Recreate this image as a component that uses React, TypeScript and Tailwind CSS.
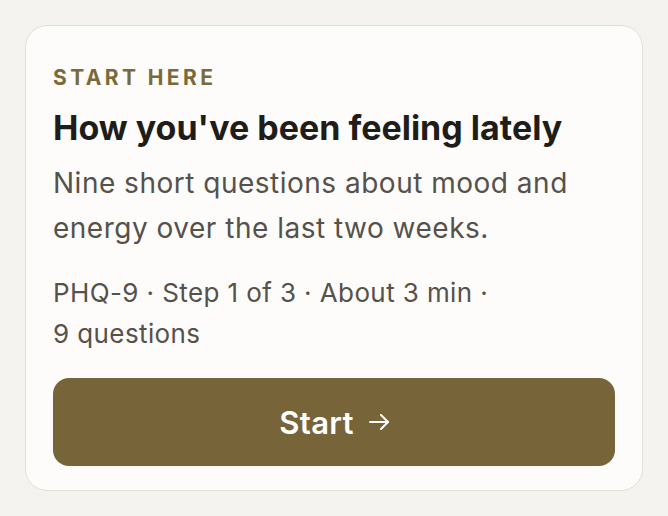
import React from "react";

export default function App() {
  return (
    <div
      className="min-h-screen w-full bg-[#f4f3ef] p-[25px]"
      style={{ fontFamily: "Inter, 'Noto Sans', sans-serif" }}
    >
      <div className="flex flex-col rounded-[22px] border border-[#e2dfd6] bg-[#fdfcfa] px-[27px] pb-[24px] pt-[40px]">
        <div className="text-[21px] font-bold uppercase leading-[24px] tracking-[3.4px] text-[#7a6a3b]">
          Start here
        </div>
        <h1 className="mt-[18px] text-[34px] font-bold leading-[40px] text-[#1f1d1a]">
          How you've been feeling lately
        </h1>
        <p className="mt-[13px] text-[28px] leading-[45px] tracking-[0.5px] text-[#55514b]">
          Nine short questions about mood and energy over the last two weeks.
        </p>
        <div className="mt-[21px] flex flex-col text-[26px] leading-[41px] tracking-[0.4px] text-[#55514b]">
          <span>PHQ-9 · Step 1 of 3 · About 3 min ·</span>
          <span>9 questions</span>
        </div>
        <button className="mt-[24px] flex h-[88px] w-full items-center justify-center gap-[15px] rounded-[16px] bg-[#776539] text-white">
          <span className="text-[31px] font-semibold leading-none tracking-[0.3px]">Start</span>
          <svg
            width="20"
            height="16"
            viewBox="0 0 20 16"
            fill="none"
            stroke="currentColor"
            strokeWidth="2"
            strokeLinecap="round"
            strokeLinejoin="round"
          >
            <path d="M1 8h18" />
            <path d="M12 1l7 7-7 7" />
          </svg>
        </button>
      </div>
    </div>
  );
}
